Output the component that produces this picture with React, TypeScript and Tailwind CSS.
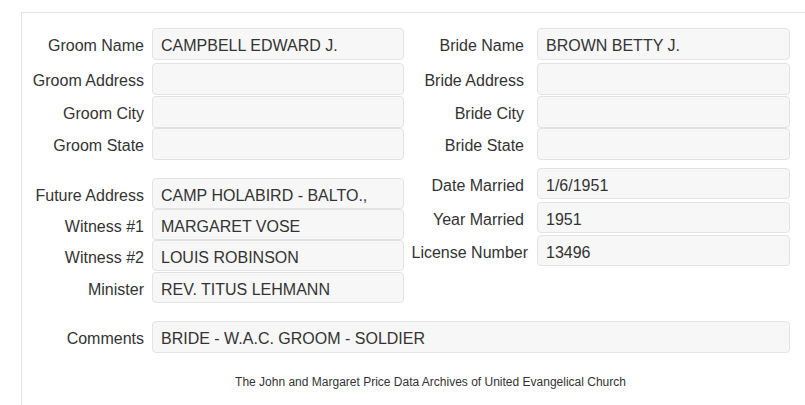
import React from 'react';

type Field = { label: string; value?: string; top?: string; h?: string; labelCls?: string };

const GROOM: Field[] = [
    { label: 'Groom Name', value: 'CAMPBELL EDWARD J.', h: 'h-[32px]' },
    { label: 'Groom Address', top: 'mt-[3px]', h: 'h-[32px]' },
    { label: 'Groom City', top: 'mt-[1px]', h: 'h-[32px]' },
    { label: 'Groom State', h: 'h-[32px]' },
];

const BRIDE: Field[] = [
    { label: 'Bride Name', value: 'BROWN BETTY J.', h: 'h-[32px]' },
    { label: 'Bride Address', top: 'mt-[3px]', h: 'h-[32px]' },
    { label: 'Bride City', top: 'mt-[1px]', h: 'h-[32px]' },
    { label: 'Bride State', h: 'h-[32px]' },
];

const EXTRA: Field[] = [
    { label: 'Future Address', value: 'CAMP HOLABIRD - BALTO.,', h: 'h-[31px]' },
    { label: 'Witness #1', value: 'MARGARET VOSE', h: 'h-[31px]' },
    { label: 'Witness #2', value: 'LOUIS ROBINSON', h: 'h-[31px]' },
    { label: 'Minister', value: 'REV. TITUS LEHMANN', top: 'mt-[1px]', h: 'h-[31px]' },
];

const MARRIAGE: Field[] = [
    { label: 'Date Married', value: '1/6/1951', h: 'h-[31px]' },
    { label: 'Year Married', value: '1951', top: 'mt-[3px]', h: 'h-[31px]' },
    { label: 'License Number', value: '13496', top: 'mt-[2px]', h: 'h-[31px]', labelCls: 'pr-[9px]' },
];

const Box: React.FC<{ value?: string; cls: string }> = ({ value, cls }) => (
    <div className={`${cls} flex items-center rounded-[4px] border border-[#e3e3e3] bg-[#f7f7f7] px-[8px] pt-[4px] text-[16px] text-[#333]`}>
        {value}
    </div>
);

const LeftRow: React.FC<{ f: Field }> = ({ f }) => (
    <div className={`flex items-center ${f.top ?? ''}`}>
        <div className="w-[122px] shrink-0 pt-[4px] text-right text-[16px] text-[#333]">{f.label}</div>
        <Box value={f.value} cls={`ml-[8px] w-[252px] ${f.h}`} />
    </div>
);

const RightRow: React.FC<{ f: Field }> = ({ f }) => (
    <div className={`flex items-center ${f.top ?? ''}`}>
        <div className={`w-[133px] shrink-0 whitespace-nowrap pt-[4px] text-right text-[16px] text-[#333] ${f.labelCls ?? 'pr-[13px]'}`}>
            {f.label}
        </div>
        <Box value={f.value} cls={`w-[253px] ${f.h}`} />
    </div>
);

export default function App() {
    return (
        <div className="h-[405px] overflow-hidden bg-white pl-[21px] pt-[12px]" style={{ fontFamily: '"Liberation Sans", Arial, sans-serif' }}>
            <div className="min-h-[400px] border-l border-t border-[#e3e3e3]">
                <div className="flex pt-[15px]">
                    <div className="flex w-[382px] flex-col">
                        {GROOM.map((f) => <LeftRow key={f.label} f={f} />)}
                        <div className="mt-[18px] flex flex-col">
                            {EXTRA.map((f) => <LeftRow key={f.label} f={f} />)}
                        </div>
                    </div>
                    <div className="flex flex-col">
                        {BRIDE.map((f) => <RightRow key={f.label} f={f} />)}
                        <div className="mt-[8px] flex flex-col">
                            {MARRIAGE.map((f) => <RightRow key={f.label} f={f} />)}
                        </div>
                    </div>
                </div>

                <div className="mt-[18px] flex items-center">
                    <div className="w-[122px] shrink-0 pt-[4px] text-right text-[16px] text-[#333]">Comments</div>
                    <Box value="BRIDE - W.A.C. GROOM - SOLDIER" cls="ml-[8px] w-[638px] h-[32px]" />
                </div>

                <p className="mt-[22px] pl-[34px] text-center text-[12px] leading-[14px] text-[#333]">
                    The John and Margaret Price Data Archives of United Evangelical Church
                </p>
            </div>
        </div>
    );
}
